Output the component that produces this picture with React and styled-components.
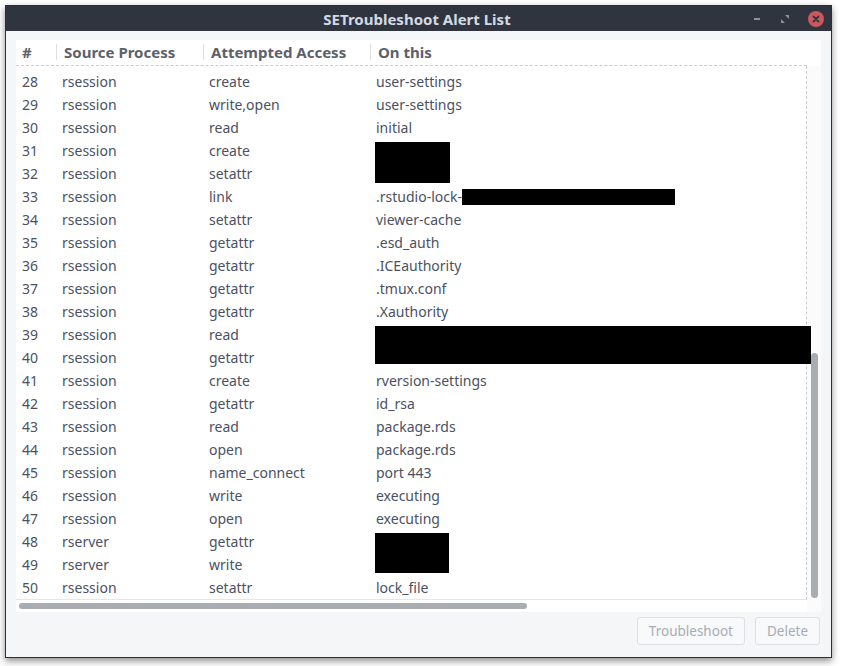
import React from 'react'
import styled, { createGlobalStyle } from 'styled-components'

const GlobalStyle = createGlobalStyle`
  html, body {
    margin: 0;
    padding: 0;
    background: #ffffff;
  }
  body {
    font-family: "Noto Sans", "DejaVu Sans", sans-serif;
  }
`

const rows = [
  [28, 'rsession', 'create', 'user-settings'],
  [29, 'rsession', 'write,open', 'user-settings'],
  [30, 'rsession', 'read', 'initial'],
  [31, 'rsession', 'create', '', { w: 75, h: 41, top: 3 }],
  [32, 'rsession', 'setattr', ''],
  [33, 'rsession', 'link', '.rstudio-lock-', null, 213],
  [34, 'rsession', 'setattr', 'viewer-cache'],
  [35, 'rsession', 'getattr', '.esd_auth'],
  [36, 'rsession', 'getattr', '.ICEauthority'],
  [37, 'rsession', 'getattr', '.tmux.conf'],
  [38, 'rsession', 'getattr', '.Xauthority'],
  [39, 'rsession', 'read', '', { w: 436, h: 38, top: 3 }],
  [40, 'rsession', 'getattr', ''],
  [41, 'rsession', 'create', 'rversion-settings'],
  [42, 'rsession', 'getattr', 'id_rsa'],
  [43, 'rsession', 'read', 'package.rds'],
  [44, 'rsession', 'open', 'package.rds'],
  [45, 'rsession', 'name_connect', 'port 443'],
  [46, 'rsession', 'write', 'executing'],
  [47, 'rsession', 'open', 'executing'],
  [48, 'rserver', 'getattr', '', { w: 74, h: 40, top: 3 }],
  [49, 'rserver', 'write', ''],
  [50, 'rsession', 'setattr', 'lock_file'],
]

const App = () => {
  return (
    <>
      <GlobalStyle />
      <Page>
        <Window>
          <TitleBar>
            <Title>SETroubleshoot Alert List</Title>
            <Controls>
              <MinButton />
              <MaxButton>
                <svg width="8" height="8" viewBox="0 0 8 8">
                  <path d="M4 0 L8 0 L8 4 Z" fill="#8b929c" />
                  <path d="M0 4 L4 8 L0 8 Z" fill="#8b929c" />
                </svg>
              </MaxButton>
              <CloseButton>
                <svg width="8" height="8" viewBox="0 0 8 8">
                  <path d="M1.5 1.5 L6.5 6.5 M6.5 1.5 L1.5 6.5" stroke="#2f343f" strokeWidth="1.8" strokeLinecap="round" />
                </svg>
              </CloseButton>
            </Controls>
          </TitleBar>
          <Body>
            <TreeFrame>
              <Viewport>
                <HeaderRow>
                  <HeadCell>#</HeadCell>
                  <HeadCell $sep>Source Process</HeadCell>
                  <HeadCell $sep>Attempted Access</HeadCell>
                  <HeadCell $sep>On this</HeadCell>
                </HeaderRow>
                <RowList>
                  {rows.map(([n, proc, access, target, block, inlineW]) => (
                    <Row key={n}>
                      <Cell>{n}</Cell>
                      <Cell>{proc}</Cell>
                      <Cell>{access}</Cell>
                      <TargetCell>
                        {target}
                        {inlineW && <InlineRedact style={{ width: inlineW }} />}
                        {block && (
                          <BlockRedact
                            style={{ width: block.w, height: block.h, top: block.top }}
                          />
                        )}
                      </TargetCell>
                    </Row>
                  ))}
                </RowList>
                <HScroll>
                  <HThumb />
                </HScroll>
              </Viewport>
              <VScroll>
                <VThumb />
              </VScroll>
            </TreeFrame>
            <ButtonBar>
              <Button disabled>Troubleshoot</Button>
              <Button disabled>Delete</Button>
            </ButtonBar>
          </Body>
        </Window>
      </Page>
    </>
  )
}

const Page = styled.div`
  width: 841px;
  height: 666px;
  padding: 5px 0 0 5px;
  box-sizing: border-box;
`

const Window = styled.div`
  width: 827px;
  height: 653px;
  box-sizing: border-box;
  border: 1px solid #2b2f38;
  background: #f5f6f7;
  display: flex;
  flex-direction: column;
  box-shadow: 0 3px 7px rgba(0, 0, 0, 0.45);
`

const TitleBar = styled.div`
  height: 25px;
  flex: none;
  background: #2f343f;
  position: relative;
  display: flex;
  align-items: center;
  justify-content: center;
`

const Title = styled.div`
  color: #d3dae3;
  font-weight: bold;
  font-size: 15px;
  margin-left: -3px;
`

const Controls = styled.div`
  position: absolute;
  right: 7px;
  top: 4px;
  display: flex;
  align-items: center;
`

const MinButton = styled.div`
  width: 28px;
  height: 17px;
  display: flex;
  align-items: center;
  justify-content: center;
  &::before {
    content: '';
    width: 6px;
    height: 2px;
    background: #8b929c;
  }
`

const MaxButton = styled.div`
  width: 28px;
  height: 17px;
  display: flex;
  align-items: center;
  justify-content: center;
`

const CloseButton = styled.div`
  width: 16px;
  height: 16px;
  margin-left: 9px;
  border-radius: 50%;
  background: #cc575d;
  display: flex;
  align-items: center;
  justify-content: center;
`

const Body = styled.div`
  flex: 1;
  display: flex;
  flex-direction: column;
  padding: 9px 10px 10px 10px;
  min-height: 0;
`

const TreeFrame = styled.div`
  display: flex;
  height: 572px;
  background: #ffffff;
`

const Viewport = styled.div`
  width: 791px;
  display: flex;
  flex-direction: column;
  position: relative;
  z-index: 1;
`

const cols = '40px 147px 167px 1fr'

const HeaderRow = styled.div`
  display: grid;
  grid-template-columns: ${cols};
  height: 26px;
  box-sizing: border-box;
  padding-bottom: 2px;
  align-items: center;
  border-bottom: 1px dashed #c9cbce;
`

const HeadCell = styled.div`
  font-weight: bold;
  font-size: 15px;
  color: #5c616c;
  height: 16px;
  line-height: 16px;
  padding-left: ${(p) => (p.$sep ? '7px' : '6px')};
  border-left: ${(p) => (p.$sep ? '1px solid #dcdfe3' : 'none')};
  white-space: nowrap;
`

const RowList = styled.div`
  flex: 1;
  padding-top: 4px;
  border-right: 1px dashed #c9cbce;
  border-bottom: 1px solid #e4e6e9;
`

const Row = styled.div`
  display: grid;
  grid-template-columns: ${cols};
  height: 23px;
  align-items: center;
  font-size: 14px;
  color: #4b5162;
`

const Cell = styled.div`
  padding-left: 6px;
  white-space: nowrap;
`

const TargetCell = styled(Cell)`
  position: relative;
  height: 23px;
  line-height: 23px;
`

const InlineRedact = styled.span`
  display: inline-block;
  height: 16px;
  background: #000;
  vertical-align: -3px;
`

const BlockRedact = styled.div`
  position: absolute;
  left: 5px;
  background: #000;
  z-index: 1;
`

const HScroll = styled.div`
  height: 12px;
  flex: none;
  display: flex;
  align-items: center;
  padding-left: 3px;
`

const HThumb = styled.div`
  width: 508px;
  height: 6px;
  border-radius: 3px;
  background: #a9acb1;
`

const VScroll = styled.div`
  flex: 1;
  margin-top: 26px;
  background: #fbfbfc;
  display: flex;
  flex-direction: column;
  justify-content: flex-end;
  align-items: center;
  padding-bottom: 14px;
`

const VThumb = styled.div`
  width: 7px;
  height: 245px;
  border-radius: 4px;
  background: #a9acb1;
`

const ButtonBar = styled.div`
  display: flex;
  justify-content: flex-end;
  gap: 10px;
  margin-top: 5px;
  padding-right: 1px;
`

const Button = styled.button`
  font-family: "Noto Sans", "DejaVu Sans", sans-serif;
  font-size: 13.5px;
  color: #a8adb5;
  background: #f8f9fa;
  border: 1px solid #dde0e4;
  border-radius: 3px;
  height: 28px;
  padding: 0 11px;
`

export default App
